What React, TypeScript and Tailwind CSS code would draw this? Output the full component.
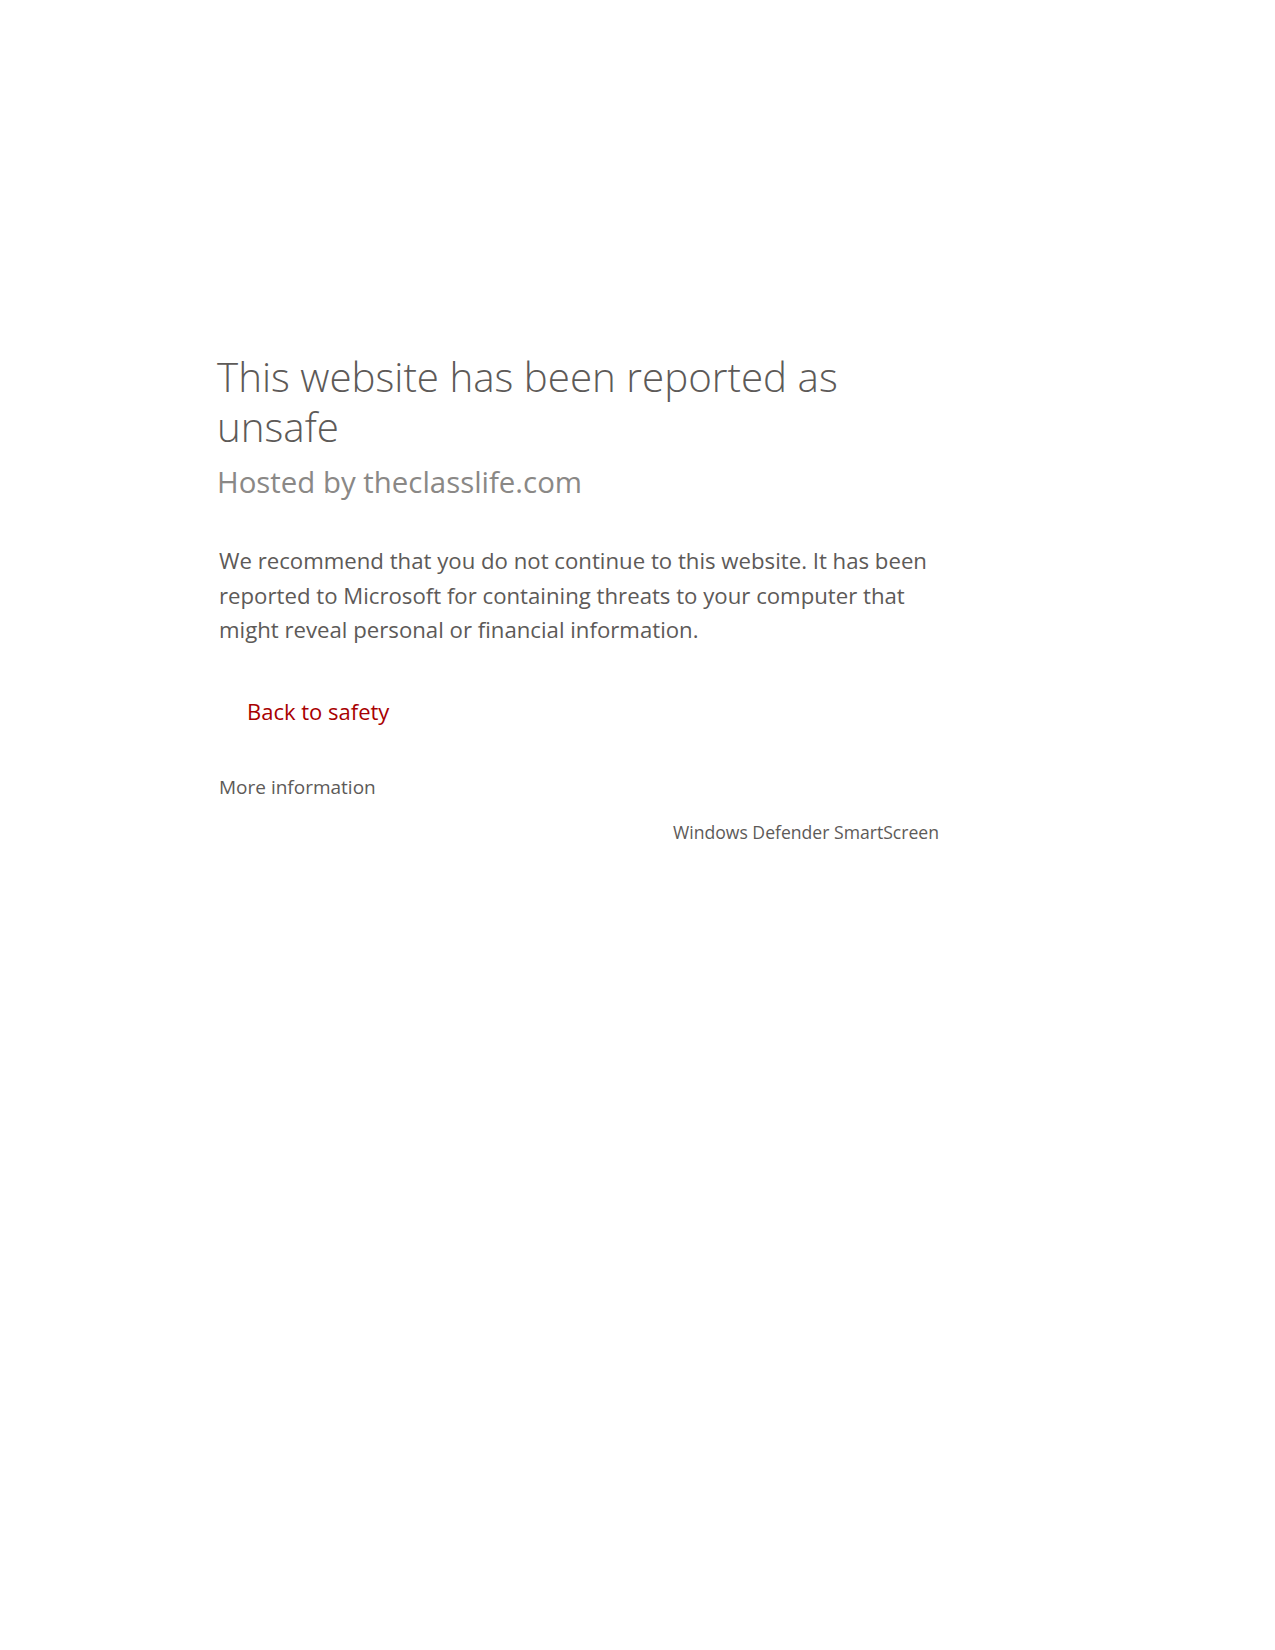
export default function App() {
  return (
    <div className="min-h-[1650px] bg-white" style={{ fontFamily: '"Open Sans", "Noto Sans", sans-serif' }}>
      <div className="pl-[219px] pt-[352px]">
        <div className="w-[725px]">
          <h1 className="text-[40.3px] leading-[50px] font-light text-[#5d5a58] -ml-[2px] w-[680px]">
            This website has been reported as unsafe
          </h1>
          <p className="mt-[12px] text-[29.4px] leading-[36px] text-[#8a8886] -ml-[2px]">Hosted by theclasslife.com</p>
          <p className="mt-[44px] text-[22.2px] leading-[34.5px] text-[#5d5a58]">
            We recommend that you do not continue to this website. It has been reported to Microsoft for containing
            threats to your computer that might reveal personal or financial information.
          </p>
          <button className="mt-[49px] ml-[28px] text-[22px] leading-[28px] text-[#a80000]">Back to safety</button>
          <div className="mt-[49px] text-[19px] leading-[24px] text-[#5d5a58]">More information</div>
          <div className="mt-[21px] text-right text-[17.6px] leading-[24px] text-[#5d5a58] w-[720px]">
            Windows Defender SmartScreen
          </div>
        </div>
      </div>
    </div>
  );
}
